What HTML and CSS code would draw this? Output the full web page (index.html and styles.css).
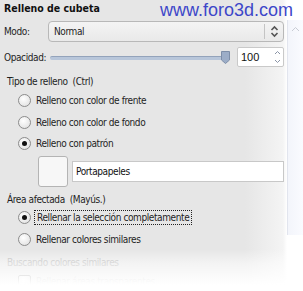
FILE: index.html
```html
<!DOCTYPE html>
<html lang="es">
<head>
    <meta charset="UTF-8">
    <title>Relleno de cubeta</title>
    <link rel="stylesheet" href="styles.css">
</head>
<body>
    <div class="panel">
        <div class="titulo">Relleno de cubeta</div>
        <div class="marca">www.foro3d.com</div>

        <div class="fila">
            <span class="etiqueta">Modo:</span>
            <div class="combo">
                <span class="combo-texto">Normal</span>
                <span class="combo-flechas">
                    <svg width="9" height="13" viewBox="0 0 9 13"><path d="M1.5 5 L4.5 2 L7.5 5 M1.5 8 L4.5 11 L7.5 8" fill="none" stroke="#555" stroke-width="1.6"/></svg>
                </span>
            </div>
        </div>

        <div class="fila fila-opacidad">
            <span class="etiqueta">Opacidad:</span>
            <div class="deslizador">
                <div class="pista"></div>
                <svg class="mando" width="11" height="15" viewBox="0 0 11 15"><path d="M1.5 1.5 H9.5 V10 L5.5 13.5 L1.5 10 Z" fill="#9cadc7" stroke="#7d8ea8"/></svg>
            </div>
            <div class="spin">
                <span class="spin-valor">100</span>
                <span class="spin-botones">
                    <svg width="9" height="18" viewBox="0 0 9 18"><path d="M2 6 L4.5 3.5 L7 6 M2 12 L4.5 14.5 L7 12" fill="none" stroke="#8a94a6" stroke-width="1"/></svg>
                </span>
            </div>
        </div>

        <div class="grupo">
            <div class="grupo-titulo">Tipo de relleno&nbsp; (Ctrl)</div>
            <label class="radio"><span class="punto"></span>Relleno con color de frente</label>
            <label class="radio"><span class="punto"></span>Relleno con color de fondo</label>
            <label class="radio"><span class="punto marcado"></span>Relleno con patrón</label>
            <div class="patron">
                <div class="muestra"></div>
                <div class="entrada">Portapapeles</div>
            </div>
        </div>

        <div class="grupo grupo-area">
            <div class="grupo-titulo">Área afectada&nbsp; (Mayús.)</div>
            <label class="radio"><span class="punto marcado"></span><span class="foco">Rellenar la selección completamente</span></label>
            <label class="radio"><span class="punto"></span>Rellenar colores similares</label>
        </div>

        <div class="grupo tenue">
            <div class="grupo-titulo">Buscando colores similares</div>
            <label class="radio"><span class="caja"></span>Rellenar áreas transparentes</label>
        </div>

        <div class="barra-lateral">
            <svg width="9" height="6" viewBox="0 0 9 6"><path d="M1 5 L4.5 1.5 L8 5" fill="none" stroke="#c8ccd4" stroke-width="1"/></svg>
        </div>
        <div class="desvanecido"></div>
    </div>
</body>
</html>
```

FILE: styles.css
```css
body {
    margin: 0;
    background: #fff;
    font-family: "DejaVu Sans Condensed", "DejaVu Sans", sans-serif;
    font-size: 10px;
    letter-spacing: -0.4px;
    color: #1e1e1e;
}
.panel {
    position: relative;
    width: 303px;
    height: 291px;
    overflow: hidden;
    background: linear-gradient(to right, #e6e6e6 0, #e6e6e6 245px, #f4f4f4 283px, #fff 287px);
    padding: 0 19px 0 4px;
    box-sizing: border-box;
}
.titulo {
    font-size: 10.5px;
    letter-spacing: 0;
    font-weight: bold;
    height: 21px;
    line-height: 16px;
    color: #111;
}
.marca {
    position: absolute;
    top: 0;
    left: 160px;
    font-family: "Liberation Sans", Arial, sans-serif;
    font-size: 18px;
    letter-spacing: 0;
    color: #3d47c9;
}
.fila {
    display: flex;
    align-items: center;
    height: 21px;
}
.etiqueta {
    width: 44px;
    flex: none;
}
.combo {
    flex: 1;
    height: 21px;
    border: 1px solid #b8b8b8;
    border-radius: 4px;
    background: linear-gradient(#f4f4f4, #e9e9e9);
    display: flex;
    align-items: center;
    box-sizing: border-box;
}
.combo-texto {
    flex: 1;
    padding-left: 5px;
}
.combo-flechas {
    width: 18px;
    height: 15px;
    border-left: 1px solid #c4c4c4;
    display: flex;
    align-items: center;
    justify-content: center;
}
.fila-opacidad {
    margin-top: 4px;
    height: 22px;
}
.deslizador {
    position: relative;
    flex: 1;
    height: 18px;
    margin-left: 2px;
    margin-right: 6px;
}
.pista {
    position: absolute;
    left: 0;
    right: 4px;
    top: 8px;
    height: 3px;
    border-radius: 2px;
    background: #b8c6da;
    border-top: 1px solid #93a3bb;
}
.mando {
    position: absolute;
    right: 0;
    top: 2px;
}
.spin {
    width: 47px;
    height: 20px;
    border: 1px solid #c9c9c9;
    border-radius: 2px;
    background: #fff;
    display: flex;
    align-items: center;
    box-sizing: border-box;
    font-family: "Liberation Sans", Arial, sans-serif;
    font-size: 11px;
    letter-spacing: 0;
    color: #111;
}
.spin-valor {
    flex: 1;
    padding-left: 3px;
}
.spin-botones {
    width: 10px;
    display: flex;
}
.grupo {
    padding-left: 3px;
    margin-top: 6px;
}
.grupo-titulo {
    height: 16px;
    line-height: 16px;
}
.radio {
    display: flex;
    align-items: center;
    height: 21.5px;
    padding-left: 11px;
}
.punto, .caja {
    width: 11px;
    height: 11px;
    border: 1px solid #8c8c8c;
    border-radius: 50%;
    background: radial-gradient(circle at 40% 35%, #ffffff, #dcdcdc);
    margin-right: 5px;
    flex: none;
    position: relative;
}
.punto.marcado::after {
    content: "";
    position: absolute;
    left: 3px;
    top: 3px;
    width: 5px;
    height: 5px;
    border-radius: 50%;
    background: #111;
}
.caja {
    border-radius: 2px;
}
.foco {
    outline: 1px dotted #222;
    outline-offset: 1px;
    padding: 0 1px;
}
.patron {
    display: flex;
    align-items: center;
    padding-left: 31px;
    margin-top: 1.5px;
    gap: 4px;
}
.muestra {
    width: 30px;
    height: 31px;
    border: 1px solid #b4b4b4;
    border-radius: 3px;
    background: #f7f7f7;
    box-sizing: border-box;
}
.entrada {
    flex: 1;
    height: 21px;
    line-height: 19px;
    border: 1px solid #c8c8c8;
    background: #fff;
    padding-left: 3px;
    box-sizing: border-box;
    color: #111;
}
.grupo-area .grupo-titulo {
    height: 14px;
    line-height: 14px;
}
.tenue {
    margin-top: 5px;
    color: #b4b4b4;
}
.barra-lateral {
    position: absolute;
    top: 20px;
    right: 0;
    width: 16px;
    height: 215px;
    background: linear-gradient(to right, #f3f5fb, #fafbff);
    border-left: 1px solid #e2e5ee;
    display: flex;
    justify-content: center;
    padding-top: 6px;
    box-sizing: border-box;
}
.desvanecido {
    position: absolute;
    left: 0;
    right: 0;
    bottom: 0;
    height: 42px;
    background: linear-gradient(rgba(255, 255, 255, 0), rgba(255, 255, 255, 0.55) 35%, #fff 85%);
}
```
